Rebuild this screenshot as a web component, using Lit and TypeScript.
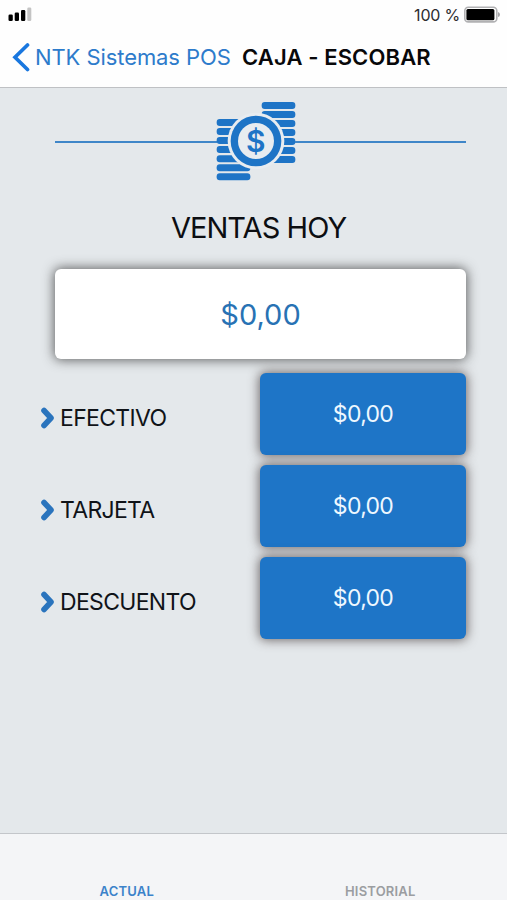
import { LitElement, html, css, svg } from "lit";
import { customElement, property } from "lit/decorators.js";

const COINS = [0, 1, 2, 3, 4, 5, 6];

@customElement("coins-icon")
class CoinsIcon extends LitElement {
  static styles = css`
    :host { display: block; width: 110px; height: 100px; }
    svg { display: block; }
    .blue { fill: #1e74c6; }
    .paper { fill: #e8ecf0; }
    .sign { fill: #1e74c6; font: 600 30px Inter, sans-serif; text-anchor: middle; }
  `;
  render() {
    return html`<svg width="110" height="100" viewBox="0 0 330 300">
      <g class="blue">
        ${COINS.map((i) => svg`<rect x="50" y=${87 + i * 27.1} width="101" height="21" rx="9"/>`)}
        ${COINS.map((i) => svg`<rect x="185" y=${36 + i * 27} width="101" height="21" rx="9"/>`)}
      </g>
      <circle class="paper" cx="168" cy="153" r="85"/>
      <circle class="blue" cx="168" cy="153" r="76"/>
      <circle class="paper" cx="168" cy="153" r="54"/>
      <text class="sign" transform="translate(167 185.5) scale(3)">$</text>
    </svg>`;
  }
}

@customElement("amount-row")
class AmountRow extends LitElement {
  @property() label = "";
  @property() amount = "";
  static styles = css`
    :host { display: flex; height: 82px; align-items: center; }
    .mark { flex: none; width: 15px; height: 22px; margin: 8px 5px 0 0; }
    .mark path { fill: none; stroke: #2a74bd; stroke-width: 5.6; stroke-linecap: round; stroke-linejoin: round; }
    .label { flex: 1; font-size: 23px; line-height: 28px; margin-top: 8px; letter-spacing: -0.68px; color: #101318; white-space: nowrap; }
    .amount {
      flex: none; width: 206px; height: 82px; box-sizing: border-box; border-radius: 6px;
      background: #1e75c7; color: #eef8ff; box-shadow: 0 0 11px 1px rgba(70, 60, 60, 0.75);
      font-size: 23px; line-height: 83px; letter-spacing: -0.68px; text-align: center;
    }
  `;
  render() {
    return html`
      <svg class="mark" viewBox="0 0 15 22"><path d="M4 3.5 11 11 4 18.5"/></svg>
      <span class="label">${this.label}</span>
      <div class="amount">${this.amount}</div>`;
  }
}

@customElement("app-root")
class AppRoot extends LitElement {
  static styles = css`
    :host {
      display: flex; flex-direction: column; width: 507px; height: 900px; overflow: hidden;
      background: #e4e8eb; font-family: Inter, sans-serif; color: #0c0e12;
    }
    .head { flex: none; height: 88px; box-sizing: border-box; background: #fefefe; border-bottom: 1px solid #bfc1c4; }
    .status { display: flex; justify-content: space-between; height: 29px; padding: 0 7px 0 8px; }
    .signal { margin-top: 7px; }
    .power { display: flex; color: #2c2c2e; font-size: 16px; line-height: 30px; letter-spacing: -0.2px; }
    .battery { margin: 6px 0 0 4px; }
    .nav { display: flex; height: 57px; line-height: 57px; font-size: 22px; white-space: nowrap; }
    .chevron { flex: none; margin: 13px 5px 0 12px; }
    .back { width: 207px; color: #2d7bcb; letter-spacing: -0.08px; }
    .title { font-weight: 600; color: #08080a; letter-spacing: 0.13px; }
    .main { flex: 1; display: flex; flex-direction: column; padding: 2px 41px 0 40px; }
    .banner { display: flex; align-items: center; height: 100px; padding-left: 15px; }
    .rule { height: 2px; background: #3f86c8; margin-top: 4px; }
    .before { width: 162px; }
    .after { flex: 1; }
    .coins { margin: 0 -15px 0 -17px; }
    .heading { height: 78px; line-height: 76px; font-size: 29px; text-align: center; font-weight: 400; margin: 0 0 0 11px; letter-spacing: -0.95px; }
    .total {
      height: 90px; margin: 1px 0 13.5px 15px; border-radius: 6px; background: #fff; color: #2872b4;
      box-shadow: 0 0 12px 1px rgba(50, 50, 50, 0.75); text-align: center; font-size: 29px; line-height: 91px; letter-spacing: 0;
    }
    .rows { display: flex; flex-direction: column; gap: 10.3px; }
    .tabs {
      flex: none; display: flex; height: 67px; box-sizing: border-box; border-top: 1px solid #c3c6ca;
      background: #f4f5f7; font-size: 13px; font-weight: 600; letter-spacing: 0.2px; line-height: 16px; padding-top: 49px; text-align: center;
    }
    .tab { flex: 1; color: #9b9da1; }
    .active { color: #3c83ca; }
  `;
  render() {
    return html`
      <div class="head">
        <div class="status">
          <svg class="signal" width="24" height="15" viewBox="0 0 24 15">
            <rect x=".5" y="7.5" width="4.3" height="6.5" rx="1.3"/>
            <rect x="6.7" y="5.5" width="4.3" height="8.5" rx="1.3"/>
            <rect x="13" y="3" width="4.3" height="11" rx="1.3"/>
            <rect x="19.3" y=".5" width="4" height="13.5" rx="1.3" fill="#c4c4c4"/>
          </svg>
          <div class="power">
            <span>100 %</span>
            <svg class="battery" width="36" height="18" viewBox="0 0 36 18">
              <rect x=".8" y="1.3" width="32" height="14.6" rx="3.5" fill="#fff" stroke="#b1b1b3" stroke-width="1.6"/>
              <rect x="2.4" y="3" width="28" height="11.2" rx="1.5"/>
              <path d="M34 6q2 .5 2 2.5t-2 2.5z" fill="#a5a5a8"/>
            </svg>
          </div>
        </div>
        <div class="nav">
          <svg class="chevron" width="18" height="30" viewBox="0 0 18 30">
            <path d="M15.5 3 3 15.2 15.5 27.5" fill="none" stroke="#1977df" stroke-width="3.7" stroke-linecap="round"/>
          </svg>
          <span class="back">NTK Sistemas POS</span>
          <span class="title">CAJA - ESCOBAR</span>
        </div>
      </div>
      <div class="main">
        <div class="banner">
          <div class="rule before"></div>
          <coins-icon class="coins"></coins-icon>
          <div class="rule after"></div>
        </div>
        <h1 class="heading">VENTAS HOY</h1>
        <div class="total">$0,00</div>
        <div class="rows">
          <amount-row label="EFECTIVO" amount="$0,00"></amount-row>
          <amount-row label="TARJETA" amount="$0,00"></amount-row>
          <amount-row label="DESCUENTO" amount="$0,00"></amount-row>
        </div>
      </div>
      <div class="tabs">
        <span class="tab active">ACTUAL</span>
        <span class="tab">HISTORIAL</span>
      </div>`;
  }
}
